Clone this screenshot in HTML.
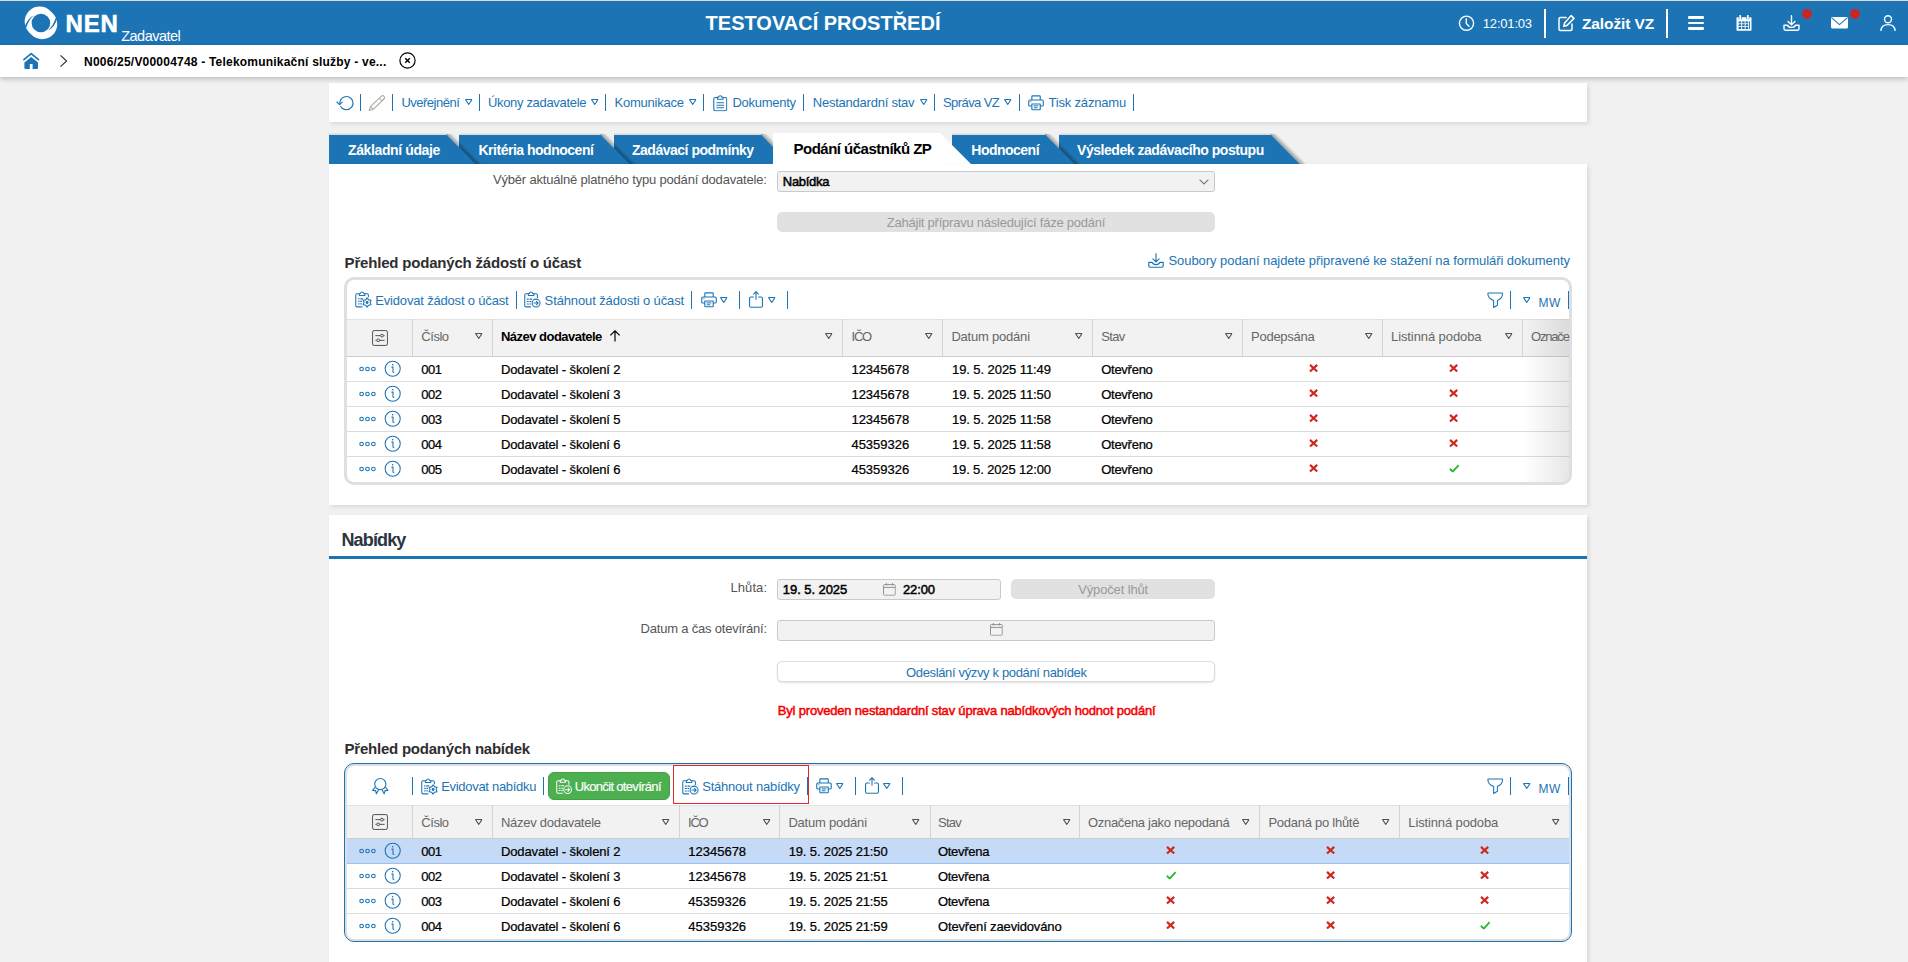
<!DOCTYPE html>
<html lang="cs">
<head>
<meta charset="utf-8">
<title>NEN Zadavatel</title>
<style>
*{box-sizing:border-box;margin:0;padding:0}
html,body{width:1908px;height:962px;overflow:hidden}
body{background:#f1f1f1;font-family:"Liberation Sans",sans-serif;font-size:13px;color:#000;position:relative}
.abs{position:absolute}
.t{position:absolute;white-space:nowrap;line-height:1}
svg{display:block;overflow:visible}
.m{-webkit-text-stroke:.24px currentColor}
.sb{-webkit-text-stroke:.5px currentColor}
</style>
</head>
<body>
<svg width="0" height="0" style="position:absolute"><defs>
<symbol id="tri" viewBox="0 0 7.5 6.2"><path d="M0.6 0.6H6.9L3.75 5.5Z" fill="none" stroke="currentColor" stroke-width="1.05" stroke-linejoin="round"/></symbol>
<symbol id="dots" viewBox="0 0 17 6"><g fill="none" stroke="currentColor" stroke-width="1.1"><circle cx="2.6" cy="3" r="1.8"/><circle cx="8.5" cy="3" r="1.8"/><circle cx="14.4" cy="3" r="1.8"/></g></symbol>
<symbol id="info" viewBox="0 0 18 18"><circle cx="9" cy="9" r="7.8" fill="none" stroke="currentColor" stroke-width="1.1"/><path d="M8.1 7.4H9.3V12.2Q9.3 12.9 10.2 12.9" fill="none" stroke="currentColor" stroke-width="1.1" stroke-linecap="round"/><circle cx="9" cy="4.9" r=".85" fill="currentColor"/></symbol>
<symbol id="xm" viewBox="0 0 9.2 8.4"><path d="M1 .9L8.2 7.5M8.2 .9L1 7.5" stroke="#cf261e" stroke-width="2.15" fill="none"/></symbol>
<symbol id="ck" viewBox="0 0 11 9"><path d="M0.9 5L4 8L10.2 1.2" stroke="#2eb82e" stroke-width="2" fill="none"/></symbol>
<symbol id="cfg" viewBox="0 0 17 17"><g fill="none" stroke="currentColor" stroke-width="1"><rect x="0.6" y="0.6" width="15.8" height="15.8" rx="1.6"/><path d="M3.6 6H13.4M3.6 11H13.4"/><circle cx="10.6" cy="6" r="1.5" fill="#f1f1f1"/><circle cx="6.6" cy="11" r="1.5" fill="#f1f1f1"/></g></symbol>
<symbol id="prn" viewBox="0 0 16 16"><g fill="none" stroke="currentColor" stroke-width="1.1" stroke-linejoin="round"><path d="M3.85 4.9V1.6Q3.85 .9 4.55 .9H11.55Q12.25 .9 12.25 1.6V4.9"/><path d="M3.85 11.05H2Q.75 11.05 .75 9.9V6.1Q.75 4.95 2 4.95H14Q15.25 4.95 15.25 6.1V9.9Q15.25 11.05 14 11.05H12.25"/><path d="M3.85 8.95H12.25V14.2Q12.25 14.75 11.7 14.75H4.4Q3.85 14.75 3.85 14.2Z"/><path d="M5.7 10.9H10.4M5.7 12.8H9.4" stroke-width="1"/><path d="M2.4 6.7H3.4" stroke-width="1"/></g></symbol>
<symbol id="clip" viewBox="0 0 15 17"><g fill="none" stroke="currentColor" stroke-width="1.15" stroke-linejoin="round"><path d="M4.4 2.6H2.2Q.8 2.6 .8 4V14.8Q.8 16.2 2.2 16.2H12.8Q14.2 16.2 14.2 14.8V4Q14.2 2.6 12.8 2.6H10.6"/><path d="M4.6 4.4V2.6Q4.6 2.2 5 2.2H5.8Q6 .7 7.5 .7Q9 .7 9.2 2.2H10Q10.4 2.2 10.4 2.6V4.4Z"/><path d="M4 8H11M4 10.6H11M4 13.2H11" stroke-linecap="round"/></g></symbol>
<symbol id="clipg" viewBox="0 0 18 18"><g fill="none" stroke="currentColor" stroke-width="1.1" stroke-linejoin="round"><path d="M4.4 3H2.2Q.8 3 .8 4.4V15.4Q.8 16.8 2.2 16.8H7.8"/><path d="M10.6 3H12.8Q14.2 3 14.2 4.4V6.6"/><path d="M4.6 4.8V3Q4.6 2.6 5 2.6H5.8Q6 1 7.5 1Q9 1 9.2 2.6H10Q10.4 2.6 10.4 3V4.8Z"/><path d="M3.4 8.4H4.8M5.6 8.4H8.6M3.4 11H4.8M5.6 11H7.4M3.4 13.6H4.8M5.6 13.6H7.2" stroke-width="1.3"/><path d="M12.8 7.3L14.4 9.4L17.0 9.8L16.0 12.2L17.0 14.6L14.4 15.0L12.8 17.1L11.2 15.0L8.6 14.6L9.6 12.2L8.6 9.7L11.2 9.4Z"/><circle cx="12.8" cy="12.2" r="1" fill="currentColor"/></g></symbol>
<symbol id="clipa" viewBox="0 0 18 18"><g fill="none" stroke="currentColor" stroke-width="1.1" stroke-linejoin="round"><path d="M4.4 3H2.2Q.8 3 .8 4.4V15.4Q.8 16.8 2.2 16.8H7.4"/><path d="M10.6 3H12.8Q14.2 3 14.2 4.4V7.4"/><path d="M4.6 4.8V3Q4.6 2.6 5 2.6H5.8Q6 1 7.5 1Q9 1 9.2 2.6H10Q10.4 2.6 10.4 3V4.8Z"/><path d="M3.4 8.6H4.6M6.2 8.6H8.4M3.4 11.2H4.6M6.2 11.2H7.4M3.4 13.8H4.6M6.2 13.8H7.2" stroke-linecap="round"/><circle cx="12.8" cy="12.8" r="4.2"/><path d="M10.6 12.8H14.8M13.2 11L15 12.8L13.2 14.6" stroke-linecap="round"/></g></symbol>
<symbol id="shr" viewBox="0 0 14 17"><g fill="none" stroke="currentColor" stroke-width="1.1" stroke-linejoin="round" stroke-linecap="round"><path d="M4.4 6H1.9Q.55 6 .55 7.4V14.8Q.55 16.2 1.9 16.2H12.1Q13.45 16.2 13.45 14.8V7.4Q13.45 6 12.1 6H9.6"/><path d="M7 8.2V.9M4.6 3.1L7 .7L9.4 3.1"/></g></symbol>
<symbol id="flt" viewBox="0 0 17 17"><path d="M1.4 .9H15.6Q16.1 .9 16.1 1.5C16.1 5.6 13.6 7.7 10.8 8.6V13.6L6.9 15.9V8.6C4 7.7 .9 5.6 .9 1.5Q.9 .9 1.4 .9Z" fill="none" stroke="currentColor" stroke-width="1.1" stroke-linejoin="round"/></symbol>
<symbol id="cal" viewBox="0 0 13 13"><g fill="none" stroke="#8c8c8c" stroke-width=".95"><rect x=".5" y="1.6" width="12" height="10.9" rx=".9"/><path d="M.5 4.5H12.5M3.4 0V2.6M9.6 0V2.6"/></g></symbol>
</defs></svg>
<div class="abs" style="left:0px;top:0px;width:1908px;height:1px;background:#dcdcdc"></div>
<div class="abs" style="left:0px;top:1px;width:1908px;height:44px;background:#1c74b4"></div>
<div class="abs" style="left:0px;top:45px;width:1908px;height:32px;background:#fff;box-shadow:0 2px 5px rgba(0,0,0,.22)"></div>
<div class="abs" style="left:329px;top:83px;width:1258px;height:38.5px;background:#fff;box-shadow:2px 2px 4px rgba(0,0,0,.10)"></div>
<div class="abs" style="left:329px;top:515px;width:1258px;height:460px;background:#fff;box-shadow:2px 2px 4px rgba(0,0,0,.10)"></div>
<svg class="abs" style="left:24px;top:6px" width="34" height="34" viewBox="0 0 34 34">
<circle cx="15.7" cy="15.6" r="15" fill="#fff"/>
<circle cx="18.2" cy="18.2" r="15" fill="#fff"/>
<circle cx="16.9" cy="17" r="9.3" fill="#1c74b4"/>
<path d="M0.6 21.8 Q2.8 12.6 10 9.2 Q4.9 13.4 2.5 21.2 Z" fill="#1c74b4"/>
<path d="M33.3 12 Q31.1 21.2 23.9 24.6 Q29 20.4 31.4 12.6 Z" fill="#1c74b4"/>
</svg>
<svg class="abs" style="left:1458px;top:15px" width="17" height="17" viewBox="0 0 17 17" fill="none" stroke="#fff" stroke-width="1.4" stroke-linecap="round"><circle cx="8.5" cy="8.2" r="7.1"/><path d="M8.3 3.8V8.4L11 11.2"/></svg>
<div class="abs" style="left:1544px;top:9px;width:2px;height:29px;background:#fff"></div>
<svg class="abs" style="left:1558px;top:14px" width="18" height="18" viewBox="0 0 18 18" fill="none" stroke="#fff" stroke-width="1.5" stroke-linecap="round" stroke-linejoin="round"><path d="M8 3.5H2.5Q1 3.5 1 5V15Q1 16.5 2.5 16.5H12.5Q14 16.5 14 15V10"/><path d="M13.2 1.6L16 4.4L9 11.4L5.8 12.2L6.6 9Z"/></svg>
<div class="abs" style="left:1666px;top:9px;width:2px;height:29px;background:#fff"></div>
<div class="abs" style="left:1688px;top:16.2px;width:16px;height:2.6px;background:#fff;border-radius:1.3px"></div>
<div class="abs" style="left:1688px;top:21.8px;width:16px;height:2.6px;background:#fff;border-radius:1.3px"></div>
<div class="abs" style="left:1688px;top:27.4px;width:16px;height:2.6px;background:#fff;border-radius:1.3px"></div>
<svg class="abs" style="left:1736px;top:15px" width="16" height="16" viewBox="0 0 16 16" ><path d="M0.5 3.2Q0.5 2.2 1.5 2.2H14.5Q15.5 2.2 15.5 3.2V15Q15.5 15.8 14.7 15.8H1.3Q0.5 15.8 0.5 15Z" fill="#fff"/><rect x="3.4" y="0" width="1.6" height="3.6" fill="#fff"/><rect x="11" y="0" width="1.6" height="3.6" fill="#fff"/><g fill="#1c74b4"><rect x="2.7" y="2.6" width=".7" height="1.6"/><rect x="5" y="2.6" width=".7" height="1.6"/><rect x="10.3" y="2.6" width=".7" height="1.6"/><rect x="12.6" y="2.6" width=".7" height="1.6"/><rect x="2.6" y="6.4" width="2.6" height="2"/><rect x="6.1" y="6.4" width="2.6" height="2"/><rect x="9.6" y="6.4" width="2.6" height="2"/><rect x="2.6" y="9.2" width="2.6" height="2"/><rect x="6.1" y="9.2" width="2.6" height="2"/><rect x="9.6" y="9.2" width="2.6" height="2"/><rect x="2.6" y="12" width="2.6" height="2"/><rect x="6.1" y="12" width="2.6" height="2"/><rect x="9.6" y="12" width="2.6" height="2"/><rect x="13" y="6.4" width=".9" height="7.6"/></g></svg>
<svg class="abs" style="left:1783px;top:15px" width="17" height="16" viewBox="0 0 17 16" fill="none" stroke="#fff" stroke-width="1.4" stroke-linecap="round" stroke-linejoin="round"><path d="M8.5 0.8V9.6M5 6.4L8.5 9.8L12 6.4"/><path d="M1 10.2V13.8Q1 15.2 2.4 15.2H14.6Q16 15.2 16 13.8V10.2H12.4Q11.8 12.4 8.5 12.4Q5.2 12.4 4.6 10.2Z"/></svg>
<div class="abs" style="left:1802px;top:9px;width:10px;height:10px;border-radius:5px;background:#c62828"></div>
<svg class="abs" style="left:1831px;top:17px" width="17" height="12" viewBox="0 0 17 12" ><rect x="0" y="0" width="17" height="11.6" rx="1.5" fill="#fff"/><path d="M0.8 0.8L8.5 7.6L16.2 0.8" fill="none" stroke="#1c74b4" stroke-width="1.1"/></svg>
<div class="abs" style="left:1850px;top:9px;width:10px;height:10px;border-radius:5px;background:#c62828"></div>
<svg class="abs" style="left:1880px;top:15px" width="16" height="16" viewBox="0 0 16 16" fill="none" stroke="#fff" stroke-width="1.4" stroke-linecap="round"><circle cx="8" cy="4.2" r="3.5"/><path d="M0.9 15.4Q1.6 9.6 8 9.6Q14.4 9.6 15.1 15.4"/></svg>
<svg class="abs" style="left:23px;top:52px" width="17" height="18" viewBox="0 0 17 18" ><path d="M0.9 7.6L8.2 1.6L15.5 7.6" fill="none" stroke="#1c74b4" stroke-width="1.7" stroke-linecap="round" stroke-linejoin="round"/><path d="M8.2 5.1L15 10.5V16Q15 17 14 17H9.6V12.1H6.8V17H2.4Q1.4 17 1.4 16V10.5Z" fill="#1c74b4"/></svg>
<svg class="abs" style="left:60px;top:55px" width="8" height="12" viewBox="0 0 8 12" fill="none" stroke="#303030" stroke-width="1.15"><path d="M0.5 0.3L6.6 6L0.5 11.7"/></svg>
<svg class="abs" style="left:399px;top:52.4px" width="17" height="17" viewBox="0 0 17 17" fill="none" stroke="#000" stroke-width="1.2"><circle cx="8.5" cy="8.5" r="7.6"/><path d="M6.2 6.2L10.8 10.8M10.8 6.2L6.2 10.8" stroke-width="1.4"/></svg>
<svg class="abs" style="left:336px;top:95px" width="18" height="16" viewBox="0 0 18 16" fill="none" stroke="#1c74b4" stroke-width="1.1" stroke-linecap="round" stroke-linejoin="round"><path d="M3.9 9A6.6 6.6 0 1 1 4.7 11.4"/><path d="M0.9 7L3.6 9.6L6.2 7.2"/></svg>
<div class="abs" style="left:360px;top:94px;width:1px;height:17px;background:#1c74b4"></div>
<div class="abs" style="left:392px;top:94px;width:1px;height:17px;background:#1c74b4"></div>
<div class="abs" style="left:479px;top:94px;width:1px;height:17px;background:#1c74b4"></div>
<div class="abs" style="left:605px;top:94px;width:1px;height:17px;background:#1c74b4"></div>
<div class="abs" style="left:703px;top:94px;width:1px;height:17px;background:#1c74b4"></div>
<div class="abs" style="left:803px;top:94px;width:1px;height:17px;background:#1c74b4"></div>
<div class="abs" style="left:934px;top:94px;width:1px;height:17px;background:#1c74b4"></div>
<div class="abs" style="left:1019px;top:94px;width:1px;height:17px;background:#1c74b4"></div>
<div class="abs" style="left:1133px;top:94px;width:1px;height:17px;background:#1c74b4"></div>
<svg class="abs" style="left:368px;top:94px" width="18" height="18" viewBox="0 0 18 18" fill="none" stroke="#b0aaa4" stroke-width="1.05" stroke-linejoin="round"><path d="M1.2 16.5L2.5 12.6L13.4 2.2A1.9 1.9 0 0 1 16 5L5.1 15.4Z"/><path d="M2.5 12.6L5.1 15.4M11.3 4.2L13.9 7"/></svg>
<svg class="abs" style="left:464.7px;top:99.2px;color:#1c74b4" width="7.5" height="6.2"><use href="#tri"/></svg>
<svg class="abs" style="left:590.6px;top:99.2px;color:#1c74b4" width="7.5" height="6.2"><use href="#tri"/></svg>
<svg class="abs" style="left:688.5px;top:99.2px;color:#1c74b4" width="7.5" height="6.2"><use href="#tri"/></svg>
<svg class="abs" style="left:713px;top:94.5px;color:#1c74b4" width="14.5" height="16.5"><use href="#clip"/></svg>
<svg class="abs" style="left:919.8px;top:99.2px;color:#1c74b4" width="7.5" height="6.2"><use href="#tri"/></svg>
<svg class="abs" style="left:1004.4px;top:99.2px;color:#1c74b4" width="7.5" height="6.2"><use href="#tri"/></svg>
<svg class="abs" style="left:1027.7px;top:94.7px;color:#1c74b4" width="16" height="16"><use href="#prn"/></svg>
<svg class="abs" style="left:1058.5px;top:135px" width="248.79999999999995" height="29"><defs><linearGradient id="g1058" gradientUnits="userSpaceOnUse" x1="212.29999999999995" y1="0" x2="215.69999999999996" y2="-3.4"><stop offset="0" stop-color="#000" stop-opacity=".34"/><stop offset="1" stop-color="#000" stop-opacity="0"/></linearGradient></defs><path d="M211.29999999999995 -1L240.79999999999995 29H247.79999999999995L218.29999999999995 -1Z" fill="url(#g1058)"/><rect x="0" y="-1.6" width="213.29999999999995" height="1.6" fill="rgba(0,0,0,.09)"/><path d="M0 0H212.29999999999995L240.79999999999995 29H0Z" fill="#1c74b4"/></svg>
<svg class="abs" style="left:952px;top:135px" width="130.29999999999995" height="29"><defs><linearGradient id="g952" gradientUnits="userSpaceOnUse" x1="93.79999999999995" y1="0" x2="97.19999999999996" y2="-3.4"><stop offset="0" stop-color="#000" stop-opacity=".34"/><stop offset="1" stop-color="#000" stop-opacity="0"/></linearGradient></defs><path d="M92.79999999999995 -1L122.29999999999995 29H129.29999999999995L99.79999999999995 -1Z" fill="url(#g952)"/><rect x="0" y="-1.6" width="94.79999999999995" height="1.6" fill="rgba(0,0,0,.09)"/><path d="M0 0H93.79999999999995L122.29999999999995 29H0Z" fill="#1c74b4"/></svg>
<svg class="abs" style="left:613.5px;top:135px" width="184.0" height="29"><defs><linearGradient id="g613" gradientUnits="userSpaceOnUse" x1="147.5" y1="0" x2="150.9" y2="-3.4"><stop offset="0" stop-color="#000" stop-opacity=".34"/><stop offset="1" stop-color="#000" stop-opacity="0"/></linearGradient></defs><path d="M146.5 -1L176.0 29H183.0L153.5 -1Z" fill="url(#g613)"/><rect x="0" y="-1.6" width="148.5" height="1.6" fill="rgba(0,0,0,.09)"/><path d="M0 0H147.5L176.0 29H0Z" fill="#1c74b4"/></svg>
<svg class="abs" style="left:459px;top:135px" width="178.5" height="29"><defs><linearGradient id="g459" gradientUnits="userSpaceOnUse" x1="142" y1="0" x2="145.4" y2="-3.4"><stop offset="0" stop-color="#000" stop-opacity=".34"/><stop offset="1" stop-color="#000" stop-opacity="0"/></linearGradient></defs><path d="M141 -1L170.5 29H177.5L148 -1Z" fill="url(#g459)"/><rect x="0" y="-1.6" width="143" height="1.6" fill="rgba(0,0,0,.09)"/><path d="M0 0H142L170.5 29H0Z" fill="#1c74b4"/></svg>
<svg class="abs" style="left:329px;top:135px" width="154.5" height="29"><defs><linearGradient id="g329" gradientUnits="userSpaceOnUse" x1="118" y1="0" x2="121.4" y2="-3.4"><stop offset="0" stop-color="#000" stop-opacity=".34"/><stop offset="1" stop-color="#000" stop-opacity="0"/></linearGradient></defs><path d="M117 -1L146.5 29H153.5L124 -1Z" fill="url(#g329)"/><rect x="0" y="-1.6" width="119" height="1.6" fill="rgba(0,0,0,.09)"/><path d="M0 0H118L146.5 29H0Z" fill="#1c74b4"/></svg>
<svg class="abs" style="left:773px;top:133px" width="206" height="31"><path d="M0 0H167L198 31H0Z" fill="#fff"/></svg>
<div class="abs" style="left:329px;top:164px;width:1258px;height:341px;background:#fff;box-shadow:2px 2px 4px rgba(0,0,0,.10)"></div>
<div class="abs" style="left:773px;top:160px;width:166px;height:8px;background:#fff"></div>
<div class="abs" style="left:777px;top:171px;width:438px;height:20.5px;background:#f2f2f2;border:1px solid #c9c9c9;border-radius:3px"></div>
<svg class="abs" style="left:1199px;top:178.5px" width="10" height="6" viewBox="0 0 10 6" fill="none" stroke="#777" stroke-width="1.1"><path d="M0.6 0.6L5 5L9.4 0.6"/></svg>
<div class="abs" style="left:777px;top:212px;width:438px;height:20px;background:#e1e1e1;border-radius:5px"></div>
<svg class="abs" style="left:1148px;top:252.5px" width="16" height="15" viewBox="0 0 16 15" fill="none" stroke="#1c74b4" stroke-width="1.15" stroke-linecap="round" stroke-linejoin="round"><path d="M8 0.7V8.6M4.9 5.8L8 8.8L11.1 5.8"/><path d="M.8 9.4V12.8Q.8 14.2 2.2 14.2H13.8Q15.2 14.2 15.2 12.8V9.4H11.8Q11.2 11.6 8 11.6Q4.8 11.6 4.2 9.4Z"/></svg>
<div class="abs" style="left:344px;top:277px;width:1228px;height:208px;border:3px solid #dddfe2;border-radius:10px;background:#fff"></div>
<div class="abs" style="left:347px;top:319px;width:1222px;height:38px;background:#f2f2f2;border-top:1px solid #e2e2e2;border-bottom:1px solid #cdcdcd"></div>
<div class="abs" style="left:412.2px;top:319px;width:1px;height:37px;background:#d4d4d4"></div>
<div class="abs" style="left:492.2px;top:319px;width:1px;height:37px;background:#d4d4d4"></div>
<div class="abs" style="left:842.2px;top:319px;width:1px;height:37px;background:#d4d4d4"></div>
<div class="abs" style="left:942.3px;top:319px;width:1px;height:37px;background:#d4d4d4"></div>
<div class="abs" style="left:1092.3px;top:319px;width:1px;height:37px;background:#d4d4d4"></div>
<div class="abs" style="left:1242.2px;top:319px;width:1px;height:37px;background:#d4d4d4"></div>
<div class="abs" style="left:1382.2px;top:319px;width:1px;height:37px;background:#d4d4d4"></div>
<div class="abs" style="left:1522.4px;top:319px;width:1px;height:37px;background:#d4d4d4"></div>
<svg class="abs" style="left:372px;top:330.0px;color:#4a4a4a" width="16" height="16"><use href="#cfg"/></svg>
<svg class="abs" style="left:475.29999999999995px;top:332.8px;color:#505050" width="7.5" height="6.2"><use href="#tri"/></svg>
<svg class="abs" style="left:824.9px;top:332.8px;color:#505050" width="7.5" height="6.2"><use href="#tri"/></svg>
<svg class="abs" style="left:925.1px;top:332.8px;color:#505050" width="7.5" height="6.2"><use href="#tri"/></svg>
<svg class="abs" style="left:1075.3000000000002px;top:332.8px;color:#505050" width="7.5" height="6.2"><use href="#tri"/></svg>
<svg class="abs" style="left:1224.9px;top:332.8px;color:#505050" width="7.5" height="6.2"><use href="#tri"/></svg>
<svg class="abs" style="left:1365.3000000000002px;top:332.8px;color:#505050" width="7.5" height="6.2"><use href="#tri"/></svg>
<svg class="abs" style="left:1505.3000000000002px;top:332.8px;color:#505050" width="7.5" height="6.2"><use href="#tri"/></svg>
<div class="abs" style="left:347px;top:381px;width:1222px;height:1px;background:#dcdcdc"></div>
<svg class="abs" style="left:358.7px;top:366px;color:#1c74b4" width="17" height="6"><use href="#dots"/></svg>
<svg class="abs" style="left:384.3px;top:360.3px;color:#1c74b4" width="17.4" height="17.4"><use href="#info"/></svg>
<svg class="abs" style="left:1308.8000000000002px;top:363.8px" width="9.2" height="8.4"><use href="#xm"/></svg>
<svg class="abs" style="left:1449.0px;top:363.8px" width="9.2" height="8.4"><use href="#xm"/></svg>
<div class="abs" style="left:347px;top:406px;width:1222px;height:1px;background:#dcdcdc"></div>
<svg class="abs" style="left:358.7px;top:391px;color:#1c74b4" width="17" height="6"><use href="#dots"/></svg>
<svg class="abs" style="left:384.3px;top:385.3px;color:#1c74b4" width="17.4" height="17.4"><use href="#info"/></svg>
<svg class="abs" style="left:1308.8000000000002px;top:388.8px" width="9.2" height="8.4"><use href="#xm"/></svg>
<svg class="abs" style="left:1449.0px;top:388.8px" width="9.2" height="8.4"><use href="#xm"/></svg>
<div class="abs" style="left:347px;top:431px;width:1222px;height:1px;background:#dcdcdc"></div>
<svg class="abs" style="left:358.7px;top:416px;color:#1c74b4" width="17" height="6"><use href="#dots"/></svg>
<svg class="abs" style="left:384.3px;top:410.3px;color:#1c74b4" width="17.4" height="17.4"><use href="#info"/></svg>
<svg class="abs" style="left:1308.8000000000002px;top:413.8px" width="9.2" height="8.4"><use href="#xm"/></svg>
<svg class="abs" style="left:1449.0px;top:413.8px" width="9.2" height="8.4"><use href="#xm"/></svg>
<div class="abs" style="left:347px;top:456px;width:1222px;height:1px;background:#dcdcdc"></div>
<svg class="abs" style="left:358.7px;top:441px;color:#1c74b4" width="17" height="6"><use href="#dots"/></svg>
<svg class="abs" style="left:384.3px;top:435.3px;color:#1c74b4" width="17.4" height="17.4"><use href="#info"/></svg>
<svg class="abs" style="left:1308.8000000000002px;top:438.8px" width="9.2" height="8.4"><use href="#xm"/></svg>
<svg class="abs" style="left:1449.0px;top:438.8px" width="9.2" height="8.4"><use href="#xm"/></svg>
<svg class="abs" style="left:358.7px;top:466px;color:#1c74b4" width="17" height="6"><use href="#dots"/></svg>
<svg class="abs" style="left:384.3px;top:460.3px;color:#1c74b4" width="17.4" height="17.4"><use href="#info"/></svg>
<svg class="abs" style="left:1308.8000000000002px;top:463.8px" width="9.2" height="8.4"><use href="#xm"/></svg>
<svg class="abs" style="left:1449.1px;top:463.9px" width="10.4" height="8.6"><use href="#ck"/></svg>
<div class="abs" style="left:1524px;top:319px;width:45px;height:163px;background:linear-gradient(90deg,rgba(110,110,110,0),rgba(110,110,110,.17));border-bottom-right-radius:7px"></div>
<div class="abs" style="left:1569px;top:319px;width:3px;height:40px;background:#dddfe2"></div>
<div class="abs" style="left:1572px;top:319px;width:15px;height:40px;background:#fff"></div>
<svg class="abs" style="left:609px;top:329.7px" width="12" height="12" viewBox="0 0 12 12" fill="none" stroke="#000" stroke-width="1.2"><path d="M6 11.5V1M1.4 5.4L6 .8L10.6 5.4"/></svg>
<svg class="abs" style="left:355px;top:291.3px;color:#1c74b4" width="17" height="17"><use href="#clipg"/></svg>
<svg class="abs" style="left:524px;top:291.3px;color:#1c74b4" width="17" height="17"><use href="#clipa"/></svg>
<div class="abs" style="left:516px;top:291px;width:1px;height:18px;background:#1c74b4"></div>
<div class="abs" style="left:691px;top:291px;width:1px;height:18px;background:#1c74b4"></div>
<div class="abs" style="left:739px;top:291px;width:1px;height:18px;background:#1c74b4"></div>
<div class="abs" style="left:787px;top:291px;width:1px;height:18px;background:#1c74b4"></div>
<svg class="abs" style="left:700.5px;top:292px;color:#1c74b4" width="16" height="16"><use href="#prn"/></svg>
<svg class="abs" style="left:720.4px;top:297px;color:#1c74b4" width="7.5" height="6.2"><use href="#tri"/></svg>
<svg class="abs" style="left:749.4px;top:291.4px;color:#1c74b4" width="14" height="17"><use href="#shr"/></svg>
<svg class="abs" style="left:768.3px;top:297px;color:#1c74b4" width="7.5" height="6.2"><use href="#tri"/></svg>
<svg class="abs" style="left:1486.6px;top:291.5px;color:#1c74b4" width="16.4" height="16.6"><use href="#flt"/></svg>
<div class="abs" style="left:1510px;top:291px;width:1px;height:18px;background:#1c74b4"></div>
<svg class="abs" style="left:1523px;top:296.9px;color:#1c74b4" width="7.5" height="6.2"><use href="#tri"/></svg>
<div class="abs" style="left:1567.8px;top:291px;width:1.3px;height:18px;background:#1c74b4"></div>
<div class="abs" style="left:329px;top:556px;width:1258px;height:3px;background:#1c74b4"></div>
<div class="abs" style="left:777px;top:579px;width:224px;height:21px;background:#f2f2f2;border:1px solid #c9c9c9;border-radius:3px"></div>
<svg class="abs" style="left:882.6px;top:582.8px" width="12.8" height="12.8"><use href="#cal"/></svg>
<div class="abs" style="left:1011px;top:579px;width:204px;height:19.6px;background:#e1e1e1;border-radius:5px"></div>
<div class="abs" style="left:777px;top:620px;width:438px;height:21px;background:#f2f2f2;border:1px solid #c9c9c9;border-radius:3px"></div>
<svg class="abs" style="left:989.8px;top:623.3px" width="12.8" height="12.8"><use href="#cal"/></svg>
<div class="abs" style="left:777px;top:661px;width:438px;height:20.6px;background:#fff;border:1px solid #dcdcdc;border-radius:5px;box-shadow:0 1px 2px rgba(0,0,0,.12)"></div>
<div class="abs" style="left:344px;top:763px;width:1228px;height:179px;border:1px solid #1c74b4;box-shadow:inset 0 0 0 2px #dddfe2;border-radius:10px;background:#fff"></div>
<div class="abs" style="left:347px;top:805px;width:1222px;height:34px;background:#f2f2f2;border-top:1px solid #e2e2e2;border-bottom:1px solid #cdcdcd"></div>
<div class="abs" style="left:412.2px;top:805px;width:1px;height:33px;background:#d4d4d4"></div>
<div class="abs" style="left:492.2px;top:805px;width:1px;height:33px;background:#d4d4d4"></div>
<div class="abs" style="left:679.2px;top:805px;width:1px;height:33px;background:#d4d4d4"></div>
<div class="abs" style="left:779px;top:805px;width:1px;height:33px;background:#d4d4d4"></div>
<div class="abs" style="left:929.6px;top:805px;width:1px;height:33px;background:#d4d4d4"></div>
<div class="abs" style="left:1079.2px;top:805px;width:1px;height:33px;background:#d4d4d4"></div>
<div class="abs" style="left:1259.3px;top:805px;width:1px;height:33px;background:#d4d4d4"></div>
<div class="abs" style="left:1399.2px;top:805px;width:1px;height:33px;background:#d4d4d4"></div>
<svg class="abs" style="left:372px;top:814.0px;color:#4a4a4a" width="16" height="16"><use href="#cfg"/></svg>
<svg class="abs" style="left:475.29999999999995px;top:819.4px;color:#505050" width="7.5" height="6.2"><use href="#tri"/></svg>
<svg class="abs" style="left:661.9px;top:819.4px;color:#505050" width="7.5" height="6.2"><use href="#tri"/></svg>
<svg class="abs" style="left:762.6px;top:819.4px;color:#505050" width="7.5" height="6.2"><use href="#tri"/></svg>
<svg class="abs" style="left:912.4px;top:819.4px;color:#505050" width="7.5" height="6.2"><use href="#tri"/></svg>
<svg class="abs" style="left:1062.8000000000002px;top:819.4px;color:#505050" width="7.5" height="6.2"><use href="#tri"/></svg>
<svg class="abs" style="left:1241.9px;top:819.4px;color:#505050" width="7.5" height="6.2"><use href="#tri"/></svg>
<svg class="abs" style="left:1382.4px;top:819.4px;color:#505050" width="7.5" height="6.2"><use href="#tri"/></svg>
<svg class="abs" style="left:1551.5px;top:819.4px;color:#505050" width="7.5" height="6.2"><use href="#tri"/></svg>
<div class="abs" style="left:347px;top:839px;width:1222px;height:25px;background:#c5daf6;border-bottom:1px solid #9cc2ef"></div>
<svg class="abs" style="left:358.7px;top:848px;color:#1c74b4" width="17" height="6"><use href="#dots"/></svg>
<svg class="abs" style="left:384.3px;top:842.3px;color:#1c74b4" width="17.4" height="17.4"><use href="#info"/></svg>
<svg class="abs" style="left:1165.8000000000002px;top:845.8px" width="9.2" height="8.4"><use href="#xm"/></svg>
<svg class="abs" style="left:1325.8000000000002px;top:845.8px" width="9.2" height="8.4"><use href="#xm"/></svg>
<svg class="abs" style="left:1480.3000000000002px;top:845.8px" width="9.2" height="8.4"><use href="#xm"/></svg>
<div class="abs" style="left:347px;top:888px;width:1222px;height:1px;background:#dcdcdc"></div>
<svg class="abs" style="left:358.7px;top:873px;color:#1c74b4" width="17" height="6"><use href="#dots"/></svg>
<svg class="abs" style="left:384.3px;top:867.3px;color:#1c74b4" width="17.4" height="17.4"><use href="#info"/></svg>
<svg class="abs" style="left:1165.9px;top:870.9px" width="10.4" height="8.6"><use href="#ck"/></svg>
<svg class="abs" style="left:1325.8000000000002px;top:870.8px" width="9.2" height="8.4"><use href="#xm"/></svg>
<svg class="abs" style="left:1480.3000000000002px;top:870.8px" width="9.2" height="8.4"><use href="#xm"/></svg>
<div class="abs" style="left:347px;top:913px;width:1222px;height:1px;background:#dcdcdc"></div>
<svg class="abs" style="left:358.7px;top:898px;color:#1c74b4" width="17" height="6"><use href="#dots"/></svg>
<svg class="abs" style="left:384.3px;top:892.3px;color:#1c74b4" width="17.4" height="17.4"><use href="#info"/></svg>
<svg class="abs" style="left:1165.8000000000002px;top:895.8px" width="9.2" height="8.4"><use href="#xm"/></svg>
<svg class="abs" style="left:1325.8000000000002px;top:895.8px" width="9.2" height="8.4"><use href="#xm"/></svg>
<svg class="abs" style="left:1480.3000000000002px;top:895.8px" width="9.2" height="8.4"><use href="#xm"/></svg>
<svg class="abs" style="left:358.7px;top:923px;color:#1c74b4" width="17" height="6"><use href="#dots"/></svg>
<svg class="abs" style="left:384.3px;top:917.3px;color:#1c74b4" width="17.4" height="17.4"><use href="#info"/></svg>
<svg class="abs" style="left:1165.8000000000002px;top:920.8px" width="9.2" height="8.4"><use href="#xm"/></svg>
<svg class="abs" style="left:1325.8000000000002px;top:920.8px" width="9.2" height="8.4"><use href="#xm"/></svg>
<svg class="abs" style="left:1480.4px;top:920.9px" width="10.4" height="8.6"><use href="#ck"/></svg>
<svg class="abs" style="left:372px;top:777.5px" width="17" height="17" viewBox="0 0 17 17" fill="none" stroke="#1c74b4" stroke-width="1.1" stroke-linejoin="round"><circle cx="8.3" cy="6.1" r="5.6"/><path d="M3.3 9.2L.6 12.4L3.6 12.6L4.4 15.8L6.7 11.6M13.3 9.2L16 12.4L13 12.6L12.2 15.8L9.9 11.6"/></svg>
<div class="abs" style="left:412px;top:777px;width:1px;height:18px;background:#1c74b4"></div>
<div class="abs" style="left:543px;top:777px;width:1px;height:18px;background:#1c74b4"></div>
<div class="abs" style="left:807px;top:777px;width:1px;height:18px;background:#1c74b4"></div>
<div class="abs" style="left:855px;top:777px;width:1px;height:18px;background:#1c74b4"></div>
<div class="abs" style="left:902px;top:777px;width:1px;height:18px;background:#1c74b4"></div>
<svg class="abs" style="left:420.5px;top:777.6px;color:#1c74b4" width="17" height="17"><use href="#clipg"/></svg>
<div class="abs" style="left:548.3px;top:772.3px;width:121.3px;height:27.4px;background:#4caf50;border:1px solid #43a047;border-radius:6px"></div>
<svg class="abs" style="left:555.9px;top:777.6px;color:#fff" width="16.4" height="16.4"><use href="#clipa"/></svg>
<div class="abs" style="left:673px;top:765px;width:136px;height:39px;border:1px solid #e5262a"></div>
<svg class="abs" style="left:682.2px;top:777.6px;color:#1c74b4" width="17" height="17"><use href="#clipa"/></svg>
<svg class="abs" style="left:816.2px;top:778px;color:#1c74b4" width="16" height="16"><use href="#prn"/></svg>
<svg class="abs" style="left:836.2px;top:783px;color:#1c74b4" width="7.5" height="6.2"><use href="#tri"/></svg>
<svg class="abs" style="left:865.2px;top:777.4px;color:#1c74b4" width="14" height="17"><use href="#shr"/></svg>
<svg class="abs" style="left:883.4px;top:783px;color:#1c74b4" width="7.5" height="6.2"><use href="#tri"/></svg>
<svg class="abs" style="left:1486.6px;top:777.5px;color:#1c74b4" width="16.4" height="16.6"><use href="#flt"/></svg>
<div class="abs" style="left:1510px;top:777px;width:1px;height:18px;background:#1c74b4"></div>
<svg class="abs" style="left:1523px;top:782.9px;color:#1c74b4" width="7.5" height="6.2"><use href="#tri"/></svg>
<div class="abs" style="left:1567.8px;top:777px;width:1.3px;height:18px;background:#1c74b4"></div>
<div class="t" style="left:65.4px;top:12px;font-size:24px;color:#fff;font-weight:bold;letter-spacing:0.93px;-webkit-text-stroke:.55px #fff;">NEN</div>
<div class="t" style="left:121.2px;top:29px;font-size:14.5px;color:#fff;letter-spacing:-0.51px;">Zadavatel</div>
<div class="t" style="left:705.6px;top:13px;font-size:20px;color:#fff;font-weight:bold;">TESTOVACÍ PROSTŘEDÍ</div>
<div class="t" style="left:1482.8px;top:17px;font-size:13px;color:#fff;letter-spacing:-0.19px;">12:01:03</div>
<div class="t" style="left:1582.0px;top:16px;font-size:15.5px;color:#fff;font-weight:bold;letter-spacing:-0.11px;">Založit VZ</div>
<div class="t" style="left:84.0px;top:56px;font-size:12px;color:#000;font-weight:bold;letter-spacing:0.21px;">N006/25/V00004748 - Telekomunikační služby - ve...</div>
<div class="t" style="left:401.4px;top:96px;font-size:13px;color:#1c74b4;letter-spacing:-0.50px;">Uveřejnění</div>
<div class="t" style="left:487.9px;top:96px;font-size:13px;color:#1c74b4;letter-spacing:-0.32px;">Úkony zadavatele</div>
<div class="t" style="left:614.5px;top:96px;font-size:13px;color:#1c74b4;letter-spacing:-0.24px;">Komunikace</div>
<div class="t" style="left:732.5px;top:96px;font-size:13px;color:#1c74b4;letter-spacing:-0.27px;">Dokumenty</div>
<div class="t" style="left:812.8px;top:96px;font-size:13px;color:#1c74b4;letter-spacing:-0.23px;">Nestandardní stav</div>
<div class="t" style="left:943.0px;top:96px;font-size:13px;color:#1c74b4;letter-spacing:-0.58px;">Správa VZ</div>
<div class="t" style="left:1048.4px;top:96px;font-size:13px;color:#1c74b4;letter-spacing:-0.17px;">Tisk záznamu</div>
<div class="t" style="left:348.0px;top:143px;font-size:14px;color:#fff;font-weight:bold;letter-spacing:-0.38px;">Základní údaje</div>
<div class="t" style="left:478.5px;top:143px;font-size:14px;color:#fff;font-weight:bold;letter-spacing:-0.49px;">Kritéria hodnocení</div>
<div class="t" style="left:632.0px;top:143px;font-size:14px;color:#fff;font-weight:bold;letter-spacing:-0.49px;">Zadávací podmínky</div>
<div class="t" style="left:793.5px;top:141px;font-size:15px;color:#000;font-weight:bold;letter-spacing:-0.51px;">Podání účastníků ZP</div>
<div class="t" style="left:971.3px;top:143px;font-size:14px;color:#fff;font-weight:bold;letter-spacing:-0.51px;">Hodnocení</div>
<div class="t" style="left:1077.0px;top:143px;font-size:14px;color:#fff;font-weight:bold;letter-spacing:-0.46px;">Výsledek zadávacího postupu</div>
<div class="t" style="left:493.0px;top:173px;font-size:13px;color:#555;letter-spacing:-0.19px;">Výběr aktuálně platného typu podání dodavatele:</div>
<div class="t sb" style="left:782.8px;top:175px;font-size:13px;color:#000;letter-spacing:-0.29px;">Nabídka</div>
<div class="t" style="left:886.8px;top:216px;font-size:13px;color:#999;letter-spacing:-0.23px;">Zahájit přípravu následující fáze podání</div>
<div class="t" style="left:344.6px;top:255px;font-size:15px;color:#2e2e2e;font-weight:bold;letter-spacing:-0.19px;">Přehled podaných žádostí o účast</div>
<div class="t" style="left:1168.5px;top:254px;font-size:13px;color:#1c74b4;letter-spacing:-0.06px;">Soubory podaní najdete připravené ke stažení na formuláři dokumenty</div>
<div class="t" style="left:421.3px;top:330px;font-size:13px;color:#666;letter-spacing:-0.46px;">Číslo</div>
<div class="t" style="left:501.0px;top:330px;font-size:13px;color:#000;font-weight:bold;letter-spacing:-0.52px;">Název dodavatele</div>
<div class="t" style="left:851.5px;top:330px;font-size:13px;color:#666;letter-spacing:-1.20px;">IČO</div>
<div class="t" style="left:951.4px;top:330px;font-size:13px;color:#666;letter-spacing:-0.21px;">Datum podáni</div>
<div class="t" style="left:1101.3px;top:330px;font-size:13px;color:#666;letter-spacing:-0.68px;">Stav</div>
<div class="t" style="left:1251.0px;top:330px;font-size:13px;color:#666;letter-spacing:-0.25px;">Podepsána</div>
<div class="t" style="left:1391.0px;top:330px;font-size:13px;color:#666;letter-spacing:-0.09px;">Listinná podoba</div>
<div class="t" style="left:1531.1px;top:330px;font-size:13px;color:#666;letter-spacing:-1.20px;">Označe</div>
<div class="t m" style="left:421.3px;top:363px;font-size:13px;color:#000;letter-spacing:-0.46px;">001</div>
<div class="t m" style="left:501.0px;top:363px;font-size:13px;color:#000;letter-spacing:-0.13px;">Dodavatel - školení 2</div>
<div class="t m" style="left:851.4px;top:363px;font-size:13px;color:#000;letter-spacing:0.01px;">12345678</div>
<div class="t m" style="left:952.0px;top:363px;font-size:13px;color:#000;letter-spacing:-0.08px;">19. 5. 2025 11:49</div>
<div class="t m" style="left:1101.2px;top:363px;font-size:13px;color:#000;letter-spacing:-0.26px;">Otevřeno</div>
<div class="t m" style="left:421.3px;top:388px;font-size:13px;color:#000;letter-spacing:-0.46px;">002</div>
<div class="t m" style="left:501.0px;top:388px;font-size:13px;color:#000;letter-spacing:-0.13px;">Dodavatel - školení 3</div>
<div class="t m" style="left:851.4px;top:388px;font-size:13px;color:#000;letter-spacing:0.01px;">12345678</div>
<div class="t m" style="left:952.0px;top:388px;font-size:13px;color:#000;letter-spacing:-0.08px;">19. 5. 2025 11:50</div>
<div class="t m" style="left:1101.2px;top:388px;font-size:13px;color:#000;letter-spacing:-0.26px;">Otevřeno</div>
<div class="t m" style="left:421.3px;top:413px;font-size:13px;color:#000;letter-spacing:-0.46px;">003</div>
<div class="t m" style="left:501.0px;top:413px;font-size:13px;color:#000;letter-spacing:-0.13px;">Dodavatel - školení 5</div>
<div class="t m" style="left:851.4px;top:413px;font-size:13px;color:#000;letter-spacing:0.01px;">12345678</div>
<div class="t m" style="left:952.0px;top:413px;font-size:13px;color:#000;letter-spacing:-0.08px;">19. 5. 2025 11:58</div>
<div class="t m" style="left:1101.2px;top:413px;font-size:13px;color:#000;letter-spacing:-0.26px;">Otevřeno</div>
<div class="t m" style="left:421.3px;top:438px;font-size:13px;color:#000;letter-spacing:-0.46px;">004</div>
<div class="t m" style="left:501.0px;top:438px;font-size:13px;color:#000;letter-spacing:-0.13px;">Dodavatel - školení 6</div>
<div class="t m" style="left:851.4px;top:438px;font-size:13px;color:#000;letter-spacing:0.01px;">45359326</div>
<div class="t m" style="left:952.0px;top:438px;font-size:13px;color:#000;letter-spacing:-0.08px;">19. 5. 2025 11:58</div>
<div class="t m" style="left:1101.2px;top:438px;font-size:13px;color:#000;letter-spacing:-0.26px;">Otevřeno</div>
<div class="t m" style="left:421.3px;top:463px;font-size:13px;color:#000;letter-spacing:-0.46px;">005</div>
<div class="t m" style="left:501.0px;top:463px;font-size:13px;color:#000;letter-spacing:-0.13px;">Dodavatel - školení 6</div>
<div class="t m" style="left:851.4px;top:463px;font-size:13px;color:#000;letter-spacing:0.01px;">45359326</div>
<div class="t m" style="left:952.0px;top:463px;font-size:13px;color:#000;letter-spacing:-0.14px;">19. 5. 2025 12:00</div>
<div class="t m" style="left:1101.2px;top:463px;font-size:13px;color:#000;letter-spacing:-0.26px;">Otevřeno</div>
<div class="t" style="left:375.3px;top:294px;font-size:13px;color:#1c74b4;letter-spacing:-0.18px;">Evidovat žádost o účast</div>
<div class="t" style="left:544.6px;top:294px;font-size:13px;color:#1c74b4;letter-spacing:-0.12px;">Stáhnout žádosti o účast</div>
<div class="t" style="left:1538.6px;top:297px;font-size:12px;color:#1c74b4;letter-spacing:0.29px;">MW</div>
<div class="t" style="left:341.4px;top:531px;font-size:18px;color:#2b3440;font-weight:bold;letter-spacing:-0.84px;">Nabídky</div>
<div class="t" style="left:730.5px;top:581px;font-size:13px;color:#555;letter-spacing:0.08px;">Lhůta:</div>
<div class="t sb" style="left:782.8px;top:583px;font-size:13px;color:#000;letter-spacing:-0.06px;">19. 5. 2025</div>
<div class="t sb" style="left:903.0px;top:583px;font-size:13px;color:#000;letter-spacing:-0.12px;">22:00</div>
<div class="t" style="left:1078.2px;top:583px;font-size:13px;color:#999;letter-spacing:-0.14px;">Výpočet lhůt</div>
<div class="t" style="left:640.5px;top:622px;font-size:13px;color:#555;letter-spacing:-0.20px;">Datum a čas otevírání:</div>
<div class="t" style="left:906.0px;top:666px;font-size:13px;color:#1c74b4;letter-spacing:-0.35px;">Odeslání výzvy k podání nabídek</div>
<div class="t sb" style="left:777.8px;top:704px;font-size:13px;color:#f40000;letter-spacing:-0.19px;">Byl proveden nestandardní stav úprava nabídkových hodnot podání</div>
<div class="t" style="left:344.6px;top:741px;font-size:15px;color:#2e2e2e;font-weight:bold;letter-spacing:-0.23px;">Přehled podaných nabídek</div>
<div class="t" style="left:421.3px;top:816px;font-size:13px;color:#666;letter-spacing:-0.46px;">Číslo</div>
<div class="t" style="left:501.0px;top:816px;font-size:13px;color:#666;letter-spacing:-0.27px;">Název dodavatele</div>
<div class="t" style="left:688.0px;top:816px;font-size:13px;color:#666;letter-spacing:-1.20px;">IČO</div>
<div class="t" style="left:788.4px;top:816px;font-size:13px;color:#666;letter-spacing:-0.21px;">Datum podáni</div>
<div class="t" style="left:937.9px;top:816px;font-size:13px;color:#666;letter-spacing:-0.68px;">Stav</div>
<div class="t" style="left:1088.0px;top:816px;font-size:13px;color:#666;letter-spacing:-0.31px;">Označena jako nepodaná</div>
<div class="t" style="left:1268.4px;top:816px;font-size:13px;color:#666;letter-spacing:-0.26px;">Podaná po lhůtě</div>
<div class="t" style="left:1408.3px;top:816px;font-size:13px;color:#666;letter-spacing:-0.13px;">Listinná podoba</div>
<div class="t m" style="left:421.3px;top:845px;font-size:13px;color:#000;letter-spacing:-0.46px;">001</div>
<div class="t m" style="left:501.0px;top:845px;font-size:13px;color:#000;letter-spacing:-0.13px;">Dodavatel - školení 2</div>
<div class="t m" style="left:688.2px;top:845px;font-size:13px;color:#000;letter-spacing:0.01px;">12345678</div>
<div class="t m" style="left:788.7px;top:845px;font-size:13px;color:#000;letter-spacing:-0.14px;">19. 5. 2025 21:50</div>
<div class="t m" style="left:938.0px;top:845px;font-size:13px;color:#000;letter-spacing:-0.30px;">Otevřena</div>
<div class="t m" style="left:421.3px;top:870px;font-size:13px;color:#000;letter-spacing:-0.46px;">002</div>
<div class="t m" style="left:501.0px;top:870px;font-size:13px;color:#000;letter-spacing:-0.13px;">Dodavatel - školení 3</div>
<div class="t m" style="left:688.2px;top:870px;font-size:13px;color:#000;letter-spacing:0.01px;">12345678</div>
<div class="t m" style="left:788.7px;top:870px;font-size:13px;color:#000;letter-spacing:-0.14px;">19. 5. 2025 21:51</div>
<div class="t m" style="left:938.0px;top:870px;font-size:13px;color:#000;letter-spacing:-0.30px;">Otevřena</div>
<div class="t m" style="left:421.3px;top:895px;font-size:13px;color:#000;letter-spacing:-0.46px;">003</div>
<div class="t m" style="left:501.0px;top:895px;font-size:13px;color:#000;letter-spacing:-0.13px;">Dodavatel - školení 6</div>
<div class="t m" style="left:688.2px;top:895px;font-size:13px;color:#000;letter-spacing:0.01px;">45359326</div>
<div class="t m" style="left:788.7px;top:895px;font-size:13px;color:#000;letter-spacing:-0.14px;">19. 5. 2025 21:55</div>
<div class="t m" style="left:938.0px;top:895px;font-size:13px;color:#000;letter-spacing:-0.30px;">Otevřena</div>
<div class="t m" style="left:421.3px;top:920px;font-size:13px;color:#000;letter-spacing:-0.46px;">004</div>
<div class="t m" style="left:501.0px;top:920px;font-size:13px;color:#000;letter-spacing:-0.13px;">Dodavatel - školení 6</div>
<div class="t m" style="left:688.2px;top:920px;font-size:13px;color:#000;letter-spacing:0.01px;">45359326</div>
<div class="t m" style="left:788.7px;top:920px;font-size:13px;color:#000;letter-spacing:-0.14px;">19. 5. 2025 21:59</div>
<div class="t m" style="left:938.0px;top:920px;font-size:13px;color:#000;letter-spacing:-0.15px;">Otevření zaevidováno</div>
<div class="t" style="left:441.2px;top:780px;font-size:13px;color:#1c74b4;letter-spacing:-0.30px;">Evidovat nabídku</div>
<div class="t" style="left:574.7px;top:780px;font-size:13px;color:#fff;letter-spacing:-0.67px;-webkit-text-stroke:.15px #fff;">Ukončit otevírání</div>
<div class="t" style="left:702.3px;top:780px;font-size:13px;color:#1c74b4;letter-spacing:-0.23px;">Stáhnout nabídky</div>
<div class="t" style="left:1538.6px;top:783px;font-size:12px;color:#1c74b4;letter-spacing:0.29px;">MW</div>
</body>
</html>
